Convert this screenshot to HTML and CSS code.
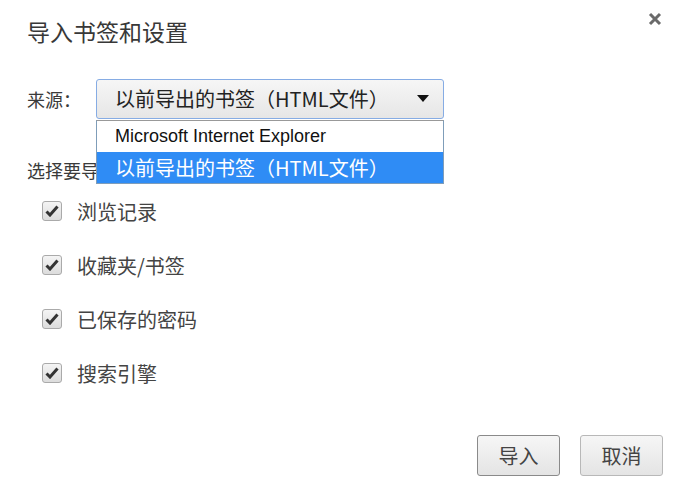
FILE: index.html
```html
<!DOCTYPE html>
<html lang="zh-CN">
<head>
<meta charset="utf-8">
<title>导入书签和设置</title>
<link rel="stylesheet" href="styles.css">
</head>
<body>
<div class="dialog">
  <div class="header">
    <h1 class="title">导入书签和设置</h1>
    <button class="close" aria-label="关闭">
      <svg width="14" height="14" viewBox="0 0 14 14"><path d="M2 2 L12 12 M12 2 L2 12" stroke="#6a6a6a" stroke-width="3" stroke-linecap="butt"/></svg>
    </button>
  </div>
  <div class="source-row">
    <span class="label">来源：</span>
    <div class="select-wrap">
      <div class="select">
        <span class="select-text">以前导出的书签（HTML文件）</span>
        <svg class="arrow" width="12" height="7" viewBox="0 0 12 7"><path d="M0 0 H12 L6 7 Z" fill="#111"/></svg>
      </div>
      <ul class="options">
        <li class="option">Microsoft Internet Explorer</li>
        <li class="option selected">以前导出的书签（HTML文件）</li>
      </ul>
    </div>
  </div>
  <p class="section-label">选择要导入的项目：</p>
  <ul class="items">
    <li class="item"><span class="checkbox"><svg width="14" height="12" viewBox="0 0 14 12"><path d="M1.5 6.5 L5 10 L12.5 1.5" fill="none" stroke="#333" stroke-width="3"/></svg></span>浏览记录</li>
    <li class="item"><span class="checkbox"><svg width="14" height="12" viewBox="0 0 14 12"><path d="M1.5 6.5 L5 10 L12.5 1.5" fill="none" stroke="#333" stroke-width="3"/></svg></span>收藏夹/书签</li>
    <li class="item"><span class="checkbox"><svg width="14" height="12" viewBox="0 0 14 12"><path d="M1.5 6.5 L5 10 L12.5 1.5" fill="none" stroke="#333" stroke-width="3"/></svg></span>已保存的密码</li>
    <li class="item"><span class="checkbox"><svg width="14" height="12" viewBox="0 0 14 12"><path d="M1.5 6.5 L5 10 L12.5 1.5" fill="none" stroke="#333" stroke-width="3"/></svg></span>搜索引擎</li>
  </ul>
  <div class="buttons">
    <button class="btn primary">导入</button>
    <button class="btn">取消</button>
  </div>
</div>
</body>
</html>
```
FILE: styles.css
```css
html, body {
  margin: 0;
  padding: 0;
  background: #fff;
}
body {
  font-family: "Noto Sans CJK SC", "Liberation Sans", sans-serif;
  color: #333;
}
.dialog {
  width: 685px;
  height: 494px;
  box-sizing: border-box;
  padding: 0 22px 0 27px;
  display: flex;
  flex-direction: column;
}
.header {
  display: flex;
  justify-content: space-between;
  align-items: flex-start;
  height: 62px;
}
.title {
  margin: 16px 0 0 0;
  font-size: 23px;
  font-weight: normal;
  line-height: 30px;
  color: #383838;
}
.close {
  border: 0;
  background: none;
  padding: 0;
  margin: 11px 0 0 0;
  width: 16px;
  height: 16px;
  display: flex;
  align-items: center;
  justify-content: center;
}
.source-row {
  display: flex;
  align-items: center;
  height: 41px;
  margin-top: 16px;
}
.label {
  font-size: 18px;
  width: 69px;
  color: #3a3a3a;
}
.select-wrap {
  position: relative;
  width: 348px;
}
.select {
  height: 40px;
  box-sizing: border-box;
  border: 1px solid #86ace4;
  border-radius: 3px;
  background: linear-gradient(#f6f6f6, #e6e6e6);
  display: flex;
  align-items: center;
  justify-content: space-between;
  padding: 0 14px 0 18px;
}
.select-text {
  font-size: 20px;
  color: #222;
}
.options {
  position: absolute;
  left: 0;
  top: 41px;
  width: 348px;
  box-sizing: border-box;
  margin: 0;
  padding: 0;
  list-style: none;
  border: 1px solid #7f9db9;
  border-top-color: #999;
  background: #fff;
}
.option {
  height: 31px;
  line-height: 31px;
  padding-left: 18px;
  font-size: 18px;
  color: #111;
  font-family: "Liberation Sans", "Noto Sans CJK SC", sans-serif;
}
.option.selected {
  background: #2f8cf5;
  color: #fff;
  font-size: 20px;
  font-family: "Noto Sans CJK SC", "Liberation Sans", sans-serif;
}
.section-label {
  margin: 38px 0 0 0;
  font-size: 18px;
  line-height: 26px;
  color: #3a3a3a;
}
.items {
  list-style: none;
  margin: 14px 0 0 15px;
  padding: 0;
  display: flex;
  flex-direction: column;
  gap: 26px;
}
.item {
  display: flex;
  align-items: center;
  height: 28px;
  font-size: 20px;
  color: #444;
}
.checkbox {
  width: 20px;
  height: 20px;
  box-sizing: border-box;
  border: 1px solid #aaa;
  border-radius: 3px;
  background: linear-gradient(#f4f4f4, #dcdcdc);
  display: flex;
  align-items: center;
  justify-content: center;
  margin-right: 15px;
}
.buttons {
  margin-top: auto;
  margin-bottom: 18px;
  display: flex;
  justify-content: flex-end;
  gap: 20px;
}
.btn {
  width: 83px;
  height: 41px;
  border: 1px solid #b8b8b8;
  border-radius: 3px;
  background: linear-gradient(#f6f6f6, #e4e4e4);
  font-family: "Noto Sans CJK SC", sans-serif;
  font-size: 20px;
  color: #444;
  padding: 0;
}
.btn.primary {
  border-color: #8a8a8a;
}
```
